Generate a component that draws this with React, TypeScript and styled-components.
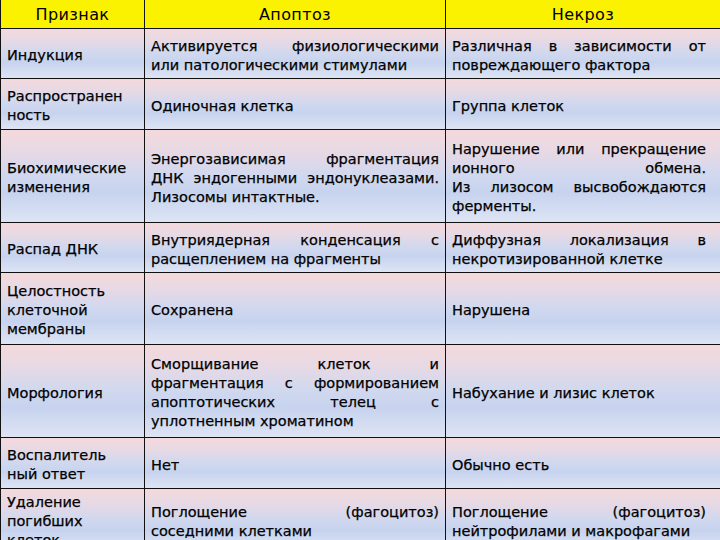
import React from 'react';
import styled, { createGlobalStyle } from 'styled-components';

const GlobalStyle = createGlobalStyle`
  html, body {
    margin: 0;
    padding: 0;
    background: #ffffff;
    overflow: hidden;
  }
  body {
    width: 720px;
    height: 540px;
    font-family: "DejaVu Sans", "Liberation Sans", sans-serif;
  }
`;

type Row = {
  sign: string[];
  apoptosis: string[];
  necrosis: string[];
  height: number;
};

const rows: Row[] = [
  {
    sign: ['Индукция'],
    apoptosis: ['Активируется физиологическими', 'или патологическими стимулами'],
    necrosis: ['Различная в зависимости от', 'повреждающего фактора'],
    height: 50,
  },
  {
    sign: ['Распространен', 'ность'],
    apoptosis: ['Одиночная клетка'],
    necrosis: ['Группа клеток'],
    height: 51,
  },
  {
    sign: ['Биохимические', 'изменения'],
    apoptosis: ['Энергозависимая фрагментация', 'ДНК эндогенными эндонуклеазами.', 'Лизосомы интактные.'],
    necrosis: ['Нарушение или прекращение', 'ионного обмена.', 'Из лизосом высвобождаются', 'ферменты.'],
    height: 93,
  },
  {
    sign: ['Распад ДНК'],
    apoptosis: ['Внутриядерная конденсация с', 'расщеплением на фрагменты'],
    necrosis: ['Диффузная локализация в', 'некротизированной клетке'],
    height: 50,
  },
  {
    sign: ['Целостность', 'клеточной', 'мембраны'],
    apoptosis: ['Сохранена'],
    necrosis: ['Нарушена'],
    height: 72,
  },
  {
    sign: ['Морфология'],
    apoptosis: ['Сморщивание клеток и', 'фрагментация с формированием', 'апоптотических телец с', 'уплотненным хроматином'],
    necrosis: ['Набухание и лизис клеток'],
    height: 93,
  },
  {
    sign: ['Воспалитель', 'ный ответ'],
    apoptosis: ['Нет'],
    necrosis: ['Обычно есть'],
    height: 51,
  },
  {
    sign: ['Удаление', 'погибших', 'клеток'],
    apoptosis: ['Поглощение (фагоцитоз)', 'соседними клетками'],
    necrosis: ['Поглощение (фагоцитоз)', 'нейтрофилами и макрофагами'],
    height: 62,
  },
];

const Table = styled.div`
  display: grid;
  grid-template-columns: 144px 301px 275px;
  width: 720px;
  border-left: 1px solid #111;
  box-sizing: border-box;
`;

const HeadCell = styled.div`
  height: 29px;
  box-sizing: border-box;
  display: flex;
  align-items: center;
  justify-content: center;
  padding-top: 1px;
  background: #fbf200;
  border-right: 1px solid #111;
  border-bottom: 1px solid #111;
  color: #000;
  font-size: 16px;
  letter-spacing: 0.4px;
`;

const Cell = styled.div<{ $h: number; $padRight?: number }>`
  height: ${(p) => p.$h}px;
  box-sizing: border-box;
  display: flex;
  flex-direction: column;
  justify-content: center;
  padding: 4px ${(p) => p.$padRight ?? 6}px 0 6px;
  background: linear-gradient(
    to bottom,
    #f4d9dc 0%,
    #e8d9e4 22%,
    #d0d8ef 50%,
    #c7d3ee 68%,
    #dde4f4 100%
  );
  border-right: 1px solid #111;
  border-bottom: 1px solid #111;
  color: #000;
  font-size: 14.5px;
  line-height: 19px;
  -webkit-text-stroke: 0.25px #000;
`;

const Line = styled.span<{ $justify: boolean }>`
  display: block;
  text-align: ${(p) => (p.$justify ? 'justify' : 'left')};
  text-align-last: ${(p) => (p.$justify ? 'justify' : 'left')};
  white-space: ${(p) => (p.$justify ? 'normal' : 'nowrap')};
`;

const Text: React.FC<{ lines: string[]; justify?: boolean }> = ({ lines, justify }) => (
  <>
    {lines.map((l, i) => (
      <Line key={i} $justify={!!justify && i < lines.length - 1}>
        {l}
      </Line>
    ))}
  </>
);

export default function App() {
  return (
    <>
      <GlobalStyle />
      <Table>
        <HeadCell>Признак</HeadCell>
        <HeadCell>Апоптоз</HeadCell>
        <HeadCell>Некроз</HeadCell>
        {rows.map((r, i) => (
          <React.Fragment key={i}>
            <Cell $h={r.height}>
              <Text lines={r.sign} />
            </Cell>
            <Cell $h={r.height}>
              <Text lines={r.apoptosis} justify />
            </Cell>
            <Cell $h={r.height} $padRight={14}>
              <Text lines={r.necrosis} justify />
            </Cell>
          </React.Fragment>
        ))}
      </Table>
    </>
  );
}
